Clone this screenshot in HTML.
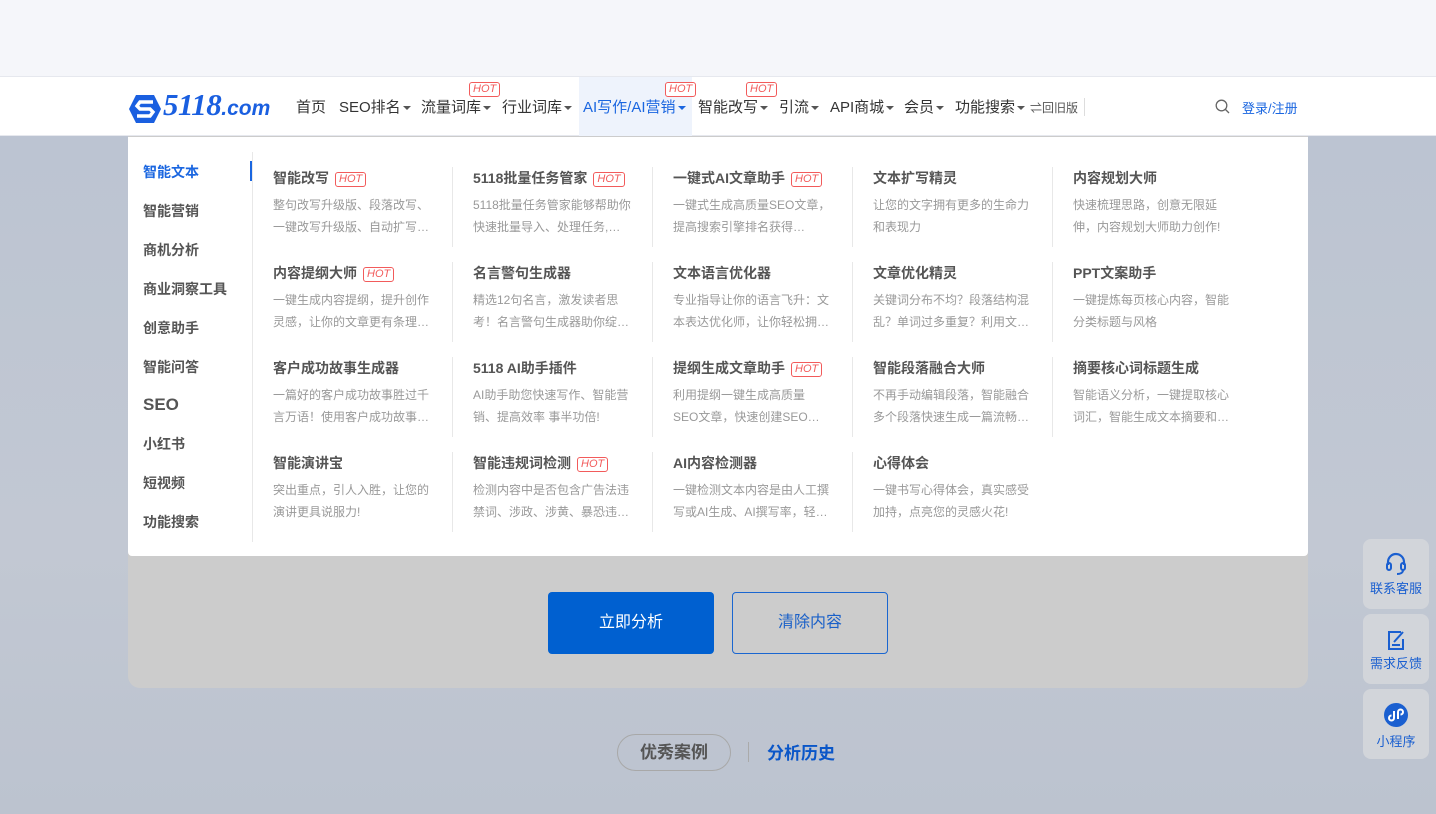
<!DOCTYPE html>
<html><head><meta charset="utf-8"><style>
*{margin:0;padding:0;box-sizing:border-box}
body{width:1436px;height:814px;overflow:hidden;position:relative;font-family:"Liberation Sans","Noto Sans CJK SC",sans-serif;background:#f5f6fa}
.bg{position:absolute;left:0;top:136px;width:1436px;height:678px;background:linear-gradient(180deg,#bcc4d2 0%,#c2c8d3 60%,#bcc3cf 100%)}
.nav{position:absolute;left:0;top:76px;width:1436px;height:60px;background:#fff;border-top:1px solid #e6e8ee;border-bottom:1px solid #e6e8ee}
.ni{position:absolute;top:19px;font-size:15px;color:#333;white-space:nowrap}
.car{display:inline-block;width:0;height:0;border-left:4px solid transparent;border-right:4px solid transparent;border-top:4px solid #555;vertical-align:middle;margin-left:2px}
.hot{display:inline-block;border:1px solid #f25b5b;color:#f25b5b;font-size:11px;font-style:italic;border-radius:3px;padding:0 3px;line-height:13px;font-family:"Liberation Sans",sans-serif}
.nhot{position:absolute;top:5px}
.card{position:absolute;left:128px;top:136px;width:1180px;height:552px;background:#ccc;border-radius:0 0 12px 12px}
.dd{position:absolute;left:128px;top:137px;width:1180px;height:419px;background:#fff;border-radius:0 0 4px 4px}
.side{position:absolute;left:15px;font-size:14px;font-weight:bold;color:#555}
.t{position:absolute;font-size:14px;font-weight:bold;color:#555;white-space:nowrap}
.t .hot{margin-left:6px;font-weight:normal;vertical-align:1px}
.d{position:absolute;font-size:12px;color:#999;line-height:22px;width:158px}
.vl{position:absolute;width:1px;height:80px;background:#e8e8e8}
.btn1{position:absolute;left:548px;top:592px;width:166px;height:62px;background:#0060d0;border-radius:4px;color:#fff;font-size:16px;text-align:center;line-height:62px}
.btn2{position:absolute;left:732px;top:592px;width:156px;height:62px;border:1px solid #1a66d0;border-radius:4px;color:#1a60c8;font-size:16px;text-align:center;line-height:60px}
.fb{position:absolute;left:1363px;width:66px;height:70px;background:#d2d5da;border-radius:8px;text-align:center;color:#1a5fd0;font-size:13px}
</style></head><body>
<div class="bg"></div>
<div class="card"></div>
<div class="btn1">立即分析</div>
<div class="btn2">清除内容</div>
<div style="position:absolute;left:617px;top:734px;width:114px;height:37px;border:1px solid #a8a8a8;border-radius:19px;font-size:17px;font-weight:bold;color:#555;text-align:center;line-height:35px">优秀案例</div>
<div style="position:absolute;left:748px;top:742px;width:1px;height:20px;background:#aaa"></div>
<div style="position:absolute;left:767px;top:739px;font-size:17px;font-weight:bold;color:#0a56c8">分析历史</div>

<div class="fb" style="top:539px"><svg width="26" height="26" viewBox="0 0 26 26" style="margin-top:12px"><path d="M5 14V11a8 8 0 0 1 16 0v3" fill="none" stroke="#1a5fd0" stroke-width="2.2"/><rect x="4" y="12" width="4" height="7" rx="2" fill="none" stroke="#1a5fd0" stroke-width="2"/><rect x="18" y="12" width="4" height="7" rx="2" fill="none" stroke="#1a5fd0" stroke-width="2"/><path d="M20 19c0 3-3 4-6 4" fill="none" stroke="#1a5fd0" stroke-width="2"/></svg><div style="margin-top:-2px">联系客服</div></div>
<div class="fb" style="top:614px"><svg width="22" height="24" viewBox="0 0 22 24" style="margin-top:14px"><path d="M16 4H4v17h14V11" fill="none" stroke="#1a5fd0" stroke-width="2"/><path d="M9 14l9-10" stroke="#1a5fd0" stroke-width="2"/><path d="M7 17h8" stroke="#1a5fd0" stroke-width="2"/></svg><div style="margin-top:-2px">需求反馈</div></div>
<div class="fb" style="top:689px"><svg width="26" height="26" viewBox="0 0 26 26" style="margin-top:13px"><circle cx="13" cy="13" r="12" fill="#1a5fd0"/><path d="M11 9v7a2.5 2.5 0 1 1-2.5-2.5M15 17V10a2.5 2.5 0 1 1 2.5 2.5" fill="none" stroke="#fff" stroke-width="2"/></svg><div style="margin-top:0px">小程序</div></div>

<div class="dd">
<div style="position:absolute;left:124px;top:15px;width:1px;height:390px;background:#e8e8e8"></div>
<div style="position:absolute;left:122px;top:24px;width:2px;height:20px;background:#1a66e0"></div>
<div class="side" style="top:25px;color:#1a66e0">智能文本</div>
<div class="side" style="top:64px">智能营销</div>
<div class="side" style="top:103px">商机分析</div>
<div class="side" style="top:142px">商业洞察工具</div>
<div class="side" style="top:181px">创意助手</div>
<div class="side" style="top:220px">智能问答</div>
<div class="side" style="top:258px;font-size:17px">SEO</div>
<div class="side" style="top:297px">小红书</div>
<div class="side" style="top:336px">短视频</div>
<div class="side" style="top:375px">功能搜索</div>

<div class="vl" style="left:324px;top:30px"></div><div class="vl" style="left:524px;top:30px"></div><div class="vl" style="left:724px;top:30px"></div><div class="vl" style="left:924px;top:30px"></div>
<div class="vl" style="left:324px;top:125px"></div><div class="vl" style="left:524px;top:125px"></div><div class="vl" style="left:724px;top:125px"></div><div class="vl" style="left:924px;top:125px"></div>
<div class="vl" style="left:324px;top:220px"></div><div class="vl" style="left:524px;top:220px"></div><div class="vl" style="left:724px;top:220px"></div><div class="vl" style="left:924px;top:220px"></div>
<div class="vl" style="left:324px;top:315px"></div><div class="vl" style="left:524px;top:315px"></div><div class="vl" style="left:724px;top:315px"></div>

<div class="t" style="left:145px;top:31px">智能改写<span class="hot">HOT</span></div>
<div class="d" style="left:145px;top:57px">整句改写升级版、段落改写、一键改写升级版、自动扩写…</div>
<div class="t" style="left:345px;top:31px">5118批量任务管家<span class="hot">HOT</span></div>
<div class="d" style="left:345px;top:57px">5118批量任务管家能够帮助你快速批量导入、处理任务,…</div>
<div class="t" style="left:545px;top:31px">一键式AI文章助手<span class="hot">HOT</span></div>
<div class="d" style="left:545px;top:57px">一键式生成高质量SEO文章，提高搜索引擎排名获得…</div>
<div class="t" style="left:745px;top:31px">文本扩写精灵</div>
<div class="d" style="left:745px;top:57px">让您的文字拥有更多的生命力和表现力</div>
<div class="t" style="left:945px;top:31px">内容规划大师</div>
<div class="d" style="left:945px;top:57px">快速梳理思路，创意无限延伸，内容规划大师助力创作!</div>

<div class="t" style="left:145px;top:126px">内容提纲大师<span class="hot">HOT</span></div>
<div class="d" style="left:145px;top:152px">一键生成内容提纲，提升创作灵感，让你的文章更有条理…</div>
<div class="t" style="left:345px;top:126px">名言警句生成器</div>
<div class="d" style="left:345px;top:152px">精选12句名言，激发读者思考！名言警句生成器助你绽…</div>
<div class="t" style="left:545px;top:126px">文本语言优化器</div>
<div class="d" style="left:545px;top:152px">专业指导让你的语言飞升：文本表达优化师，让你轻松拥…</div>
<div class="t" style="left:745px;top:126px">文章优化精灵</div>
<div class="d" style="left:745px;top:152px">关键词分布不均？段落结构混乱？单词过多重复？利用文…</div>
<div class="t" style="left:945px;top:126px">PPT文案助手</div>
<div class="d" style="left:945px;top:152px">一键提炼每页核心内容，智能分类标题与风格</div>

<div class="t" style="left:145px;top:221px">客户成功故事生成器</div>
<div class="d" style="left:145px;top:247px">一篇好的客户成功故事胜过千言万语！使用客户成功故事…</div>
<div class="t" style="left:345px;top:221px">5118 AI助手插件</div>
<div class="d" style="left:345px;top:247px">AI助手助您快速写作、智能营销、提高效率 事半功倍!</div>
<div class="t" style="left:545px;top:221px">提纲生成文章助手<span class="hot">HOT</span></div>
<div class="d" style="left:545px;top:247px">利用提纲一键生成高质量<br>SEO文章，快速创建SEO…</div>
<div class="t" style="left:745px;top:221px">智能段落融合大师</div>
<div class="d" style="left:745px;top:247px">不再手动编辑段落，智能融合多个段落快速生成一篇流畅…</div>
<div class="t" style="left:945px;top:221px">摘要核心词标题生成</div>
<div class="d" style="left:945px;top:247px">智能语义分析，一键提取核心词汇，智能生成文本摘要和…</div>

<div class="t" style="left:145px;top:316px">智能演讲宝</div>
<div class="d" style="left:145px;top:342px">突出重点，引人入胜，让您的演讲更具说服力!</div>
<div class="t" style="left:345px;top:316px">智能违规词检测<span class="hot">HOT</span></div>
<div class="d" style="left:345px;top:342px">检测内容中是否包含广告法违禁词、涉政、涉黄、暴恐违…</div>
<div class="t" style="left:545px;top:316px">AI内容检测器</div>
<div class="d" style="left:545px;top:342px">一键检测文本内容是由人工撰写或AI生成、AI撰写率，轻…</div>
<div class="t" style="left:745px;top:316px">心得体会</div>
<div class="d" style="left:745px;top:342px">一键书写心得体会，真实感受加持，点亮您的灵感火花!</div>
</div>

<div class="nav">
<svg style="position:absolute;left:128px;top:17px" width="34" height="30" viewBox="0 0 34 30"><path d="M8 1h18l7 14-7 14H8L1 15z" fill="#1a5fe0"/><path d="M25 8H12l-3 4 3 3h10l3 3-3 4H9" fill="none" stroke="#fff" stroke-width="3.4"/></svg>
<div style="position:absolute;left:163px;top:10px;font-size:31px;font-weight:bold;font-style:italic;color:#1a5fe0;font-family:'Liberation Serif',serif;letter-spacing:-0.5px">5118<span style="font-size:21px;font-family:'Liberation Sans',sans-serif;letter-spacing:0">.com</span></div>
<div style="position:absolute;left:579px;top:0;width:113px;height:59px;background:#eef3fc"></div>
<div class="ni" style="left:296px">首页</div>
<div class="ni" style="left:339px">SEO排名<span class="car"></span></div>
<div class="ni" style="left:421px">流量词库<span class="car"></span></div>
<div class="hot nhot" style="left:469px;background:#fff">HOT</div>
<div class="ni" style="left:502px">行业词库<span class="car"></span></div>
<div class="ni" style="left:583px;color:#1a66e0">AI写作/AI营销<span class="car" style="border-top-color:#1a66e0"></span></div>
<div class="hot nhot" style="left:665px;background:#fff">HOT</div>
<div class="ni" style="left:698px">智能改写<span class="car"></span></div>
<div class="hot nhot" style="left:746px;background:#fff">HOT</div>
<div class="ni" style="left:779px">引流<span class="car"></span></div>
<div class="ni" style="left:830px">API商城<span class="car"></span></div>
<div class="ni" style="left:904px">会员<span class="car"></span></div>
<div class="ni" style="left:955px">功能搜索<span class="car"></span></div>
<div class="ni" style="left:1030px;font-size:12px;top:22px;color:#555">⇌回旧版</div>
<div style="position:absolute;left:1084px;top:21px;width:1px;height:18px;background:#ddd"></div>
<svg style="position:absolute;left:1215px;top:22px" width="15" height="15" viewBox="0 0 15 15"><circle cx="6.5" cy="6.5" r="5.3" fill="none" stroke="#666" stroke-width="1.3"/><path d="M10.5 10.5l3.5 3.5" stroke="#666" stroke-width="1.3"/></svg>
<div class="ni" style="left:1242px;top:21px;font-size:13px;color:#1a66e0">登录/注册</div>
</div>
</body></html>
